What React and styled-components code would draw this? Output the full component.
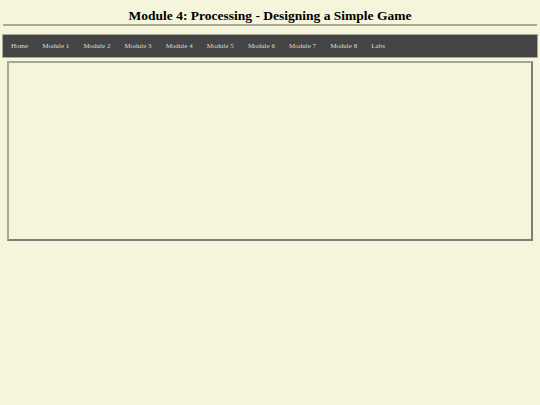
import styled, { createGlobalStyle } from 'styled-components'

const GlobalStyle = createGlobalStyle`
    html, body {
        margin: 0;
        padding: 0;
        background: #f5f5dc;
    }
    body {
        font-family: "Liberation Serif", "Times New Roman", serif;
    }
`;

const navItems = [
    'Home',
    'Module 1',
    'Module 2',
    'Module 3',
    'Module 4',
    'Module 5',
    'Module 6',
    'Module 7',
    'Module 8',
    'Labs',
];

const App = () => {
    return (
        <Wrapper>
            <GlobalStyle />
            <Title>Module 4: Processing - Designing a Simple Game</Title>
            <Nav>
                {navItems.map((item) => (
                    <NavLink key={item} href='#'>
                        {item}
                    </NavLink>
                ))}
            </Nav>
            <Frame />
        </Wrapper>
    );
};

const Wrapper = styled.main`
    padding: 0 3px;
    height: 405px;
    box-sizing: border-box;
`;

const Title = styled.h1`
    margin: 0;
    padding-top: 8px;
    font-size: 13.5px;
    line-height: 16px;
    font-weight: 700;
    text-align: center;
    color: #000;
    border-bottom: 2px solid #a9a996;
`;

const Nav = styled.nav`
    display: flex;
    align-items: center;
    margin-top: 9px;
    height: 22px;
    padding: 0 1px;
    background: #444444;
    box-shadow: 0 0 0 1px #a8a898;
`;

const NavLink = styled.a`
    padding: 0 7.05px;
    font-size: 7px;
    color: #dcdcd2;
    text-decoration: none;
`;

const Frame = styled.div`
    margin: 4px 4px 0;
    height: 176px;
    border: 2px solid;
    border-color: #a8a898 #7c7c72 #7c7c72 #a8a898;
`;

export default App;
